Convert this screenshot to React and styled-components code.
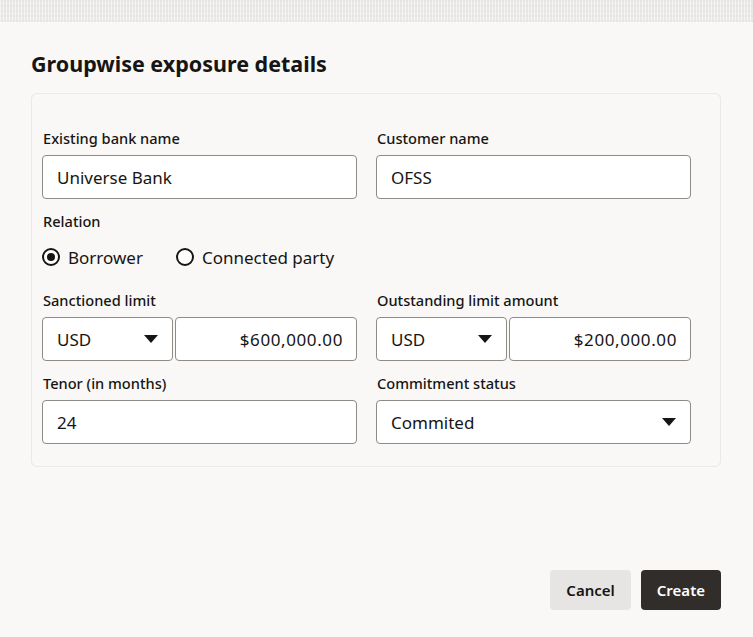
import React from 'react';
import styled, { createGlobalStyle } from 'styled-components';

const GlobalStyle = createGlobalStyle`
  html, body {
    margin: 0;
    padding: 0;
    background: #f9f8f6;
  }
  body {
    font-family: 'Noto Sans', 'Open Sans', sans-serif;
    color: #161513;
  }
`;

const Caret = () => (
  <svg width="14" height="8" viewBox="0 0 14 8">
    <path d="M0 0 L14 0 L7 8 Z" fill="#161513" />
  </svg>
);

const App = () => (
  <>
    <GlobalStyle />
    <Page>
      <TopStrip />
      <Dialog>
        <Title>Groupwise exposure details</Title>
        <Card>
          <Grid>
            <Field>
              <Label>Existing bank name</Label>
              <TextBox>Universe Bank</TextBox>
            </Field>
            <Field>
              <Label>Customer name</Label>
              <TextBox>OFSS</TextBox>
            </Field>
          </Grid>

          <Field>
            <Label>Relation</Label>
            <RadioGroup>
              <RadioOption>
                <RadioCircle checked />
                Borrower
              </RadioOption>
              <RadioOption>
                <RadioCircle />
                Connected party
              </RadioOption>
            </RadioGroup>
          </Field>

          <Grid>
            <Field>
              <Label>Sanctioned limit</Label>
              <AmountRow>
                <SelectBox width="131px">
                  USD
                  <Caret />
                </SelectBox>
                <AmountBox>$600,000.00</AmountBox>
              </AmountRow>
            </Field>
            <Field>
              <Label>Outstanding limit amount</Label>
              <AmountRow>
                <SelectBox width="131px">
                  USD
                  <Caret />
                </SelectBox>
                <AmountBox>$200,000.00</AmountBox>
              </AmountRow>
            </Field>
            <Field>
              <Label>Tenor (in months)</Label>
              <TextBox>24</TextBox>
            </Field>
            <Field>
              <Label>Commitment status</Label>
              <SelectBox>
                Commited
                <Caret />
              </SelectBox>
            </Field>
          </Grid>
        </Card>

        <Footer>
          <Button>Cancel</Button>
          <Button primary>Create</Button>
        </Footer>
      </Dialog>
    </Page>
  </>
);

export default App;

const Page = styled.div`
  width: 753px;
  height: 637px;
  display: flex;
  flex-direction: column;
  overflow: hidden;
`;

const TopStrip = styled.div`
  height: 22px;
  flex-shrink: 0;
  background-color: #ebe9e7;
  background-image:
    repeating-linear-gradient(90deg, rgba(255,255,255,0.55) 0 1px, transparent 1px 3px),
    repeating-linear-gradient(0deg, rgba(0,0,0,0.025) 0 2px, transparent 2px 5px);
`;

const Dialog = styled.div`
  flex: 1;
  display: flex;
  flex-direction: column;
  padding: 28px 32px 27px 31px;
`;

const Title = styled.h1`
  margin: 0 0 15px;
  font-size: 21.5px;
  line-height: 28px;
  font-weight: 700;
  color: #161513;
`;

const Card = styled.div`
  border: 1px solid #ebe8e5;
  border-radius: 6px;
  padding: 35px 30px 22px 10px;
  display: flex;
  flex-direction: column;
  gap: 13px;
`;

const Grid = styled.div`
  display: grid;
  grid-template-columns: 315px 315px;
  column-gap: 19px;
  row-gap: 13px;
`;

const Field = styled.div`
  display: flex;
  flex-direction: column;
`;

const Label = styled.div`
  font-size: 14.6px;
  line-height: 18px;
  font-weight: 500;
  color: #161513;
  margin: 0 0 0 1px;
  padding-bottom: 8px;
`;

const TextBox = styled.div`
  flex: none;
  height: 44px;
  box-sizing: border-box;
  background: #fff;
  border: 1px solid #8f8b86;
  border-radius: 4px;
  padding: 0 14px;
  display: flex;
  align-items: center;
  font-size: 17px;
  color: #161513;
`;

const AmountBox = styled(TextBox)`
  flex: 1 1 0;
  justify-content: flex-end;
  padding-right: 13px;
  letter-spacing: 0.6px;
`;

const SelectBox = styled(TextBox)`
  flex: ${({ width }) => (width ? `0 0 ${width}` : 'none')};
  justify-content: space-between;
`;

const AmountRow = styled.div`
  display: flex;
  gap: 2px;
`;

const RadioGroup = styled.div`
  display: flex;
  gap: 33px;
  height: 38px;
  align-items: center;
  margin-bottom: 2px;
`;

const RadioOption = styled.div`
  display: flex;
  align-items: center;
  gap: 8px;
  font-size: 17px;
  color: #161513;
`;

const RadioCircle = styled.span`
  width: 18px;
  height: 18px;
  box-sizing: border-box;
  border: 2px solid #161513;
  border-radius: 50%;
  display: inline-flex;
  align-items: center;
  justify-content: center;
  background: #fff;
  &::after {
    content: '';
    width: 8px;
    height: 8px;
    border-radius: 50%;
    background: ${({ checked }) => (checked ? '#161513' : 'transparent')};
  }
`;

const Footer = styled.div`
  margin-top: auto;
  display: flex;
  justify-content: flex-end;
  gap: 10px;
`;

const Button = styled.button`
  height: 40px;
  min-width: 80px;
  padding: 0 16px;
  border: none;
  border-radius: 4px;
  font-family: inherit;
  font-size: 15px;
  font-weight: 600;
  background: ${({ primary }) => (primary ? '#312d2a' : '#e7e5e3')};
  color: ${({ primary }) => (primary ? '#fff' : '#161513')};
  cursor: pointer;
`;
